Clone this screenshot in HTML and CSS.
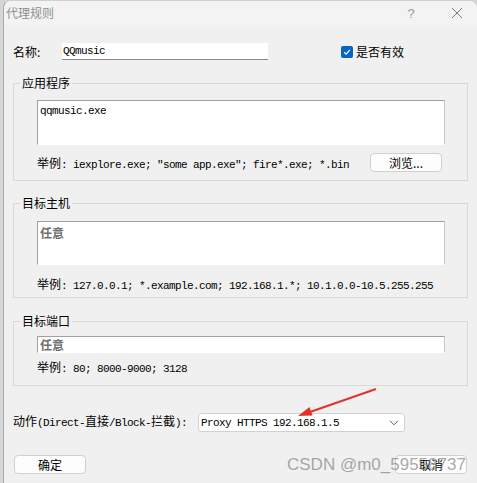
FILE: index.html
```html
<!DOCTYPE html>
<html lang="zh-CN">
<head>
    <meta charset="UTF-8">
    <title>代理规则</title>
    <link rel="stylesheet" href="styles.css">
</head>
<body>
    <div class="dialog">
        <div class="titlebar">
            <span class="title">代理规则</span>
            <span class="help">?</span>
            <span class="close">
                <svg width="12" height="12" viewBox="0 0 12 12"><path d="M1 1L11 11M11 1L1 11" stroke="#7a7a7a" stroke-width="1"/></svg>
            </span>
        </div>
        <div class="content">
            <div class="name-row">
                <label class="name-label">名称:</label>
                <input class="name-input mono" type="text" value="QQmusic">
                <label class="enabled">
                    <span class="checkbox">
                        <svg width="8" height="8" viewBox="0 0 8 8"><path d="M1.2 4.2L3.2 6.1L6.8 1.9" fill="none" stroke="#fff" stroke-width="1.2"/></svg>
                    </span>是否有效
                </label>
            </div>

            <fieldset class="group group-app">
                <legend>应用程序</legend>
                <div class="group-body">
                    <textarea class="field area mono">qqmusic.exe</textarea>
                    <div class="hint-row">
                        <span class="hint mono"><span class="cjk">举例</span>: iexplore.exe; "some app.exe"; fire*.exe; *.bin</span>
                        <button class="btn btn-browse">浏览...</button>
                    </div>
                </div>
            </fieldset>

            <fieldset class="group group-host">
                <legend>目标主机</legend>
                <div class="group-body">
                    <textarea class="field area any">任意</textarea>
                    <div class="hint mono"><span class="cjk">举例</span>: 127.0.0.1; *.example.com; 192.168.1.*; 10.1.0.0-10.5.255.255</div>
                </div>
            </fieldset>

            <fieldset class="group group-port">
                <legend>目标端口</legend>
                <div class="group-body">
                    <input class="field line any" type="text" value="任意">
                    <div class="hint mono"><span class="cjk">举例</span>: 80; 8000-9000; 3128</div>
                </div>
            </fieldset>

            <div class="action-row">
                <span class="action-label mono"><span class="cjk">动作</span>(Direct-<span class="cjk">直接</span>/Block-<span class="cjk">拦截</span>):</span>
                <div class="select-box">
                    <span class="mono">Proxy HTTPS 192.168.1.5</span>
                    <svg width="10" height="6" viewBox="0 0 10 6"><path d="M1 0.8L5 4.8L9 0.8" fill="none" stroke="#606060" stroke-width="1"/></svg>
                </div>
            </div>

            <div class="button-row">
                <button class="btn btn-main">确定</button>
                <button class="btn btn-main">取消</button>
            </div>
        </div>
    </div>

    <!-- annotation drawn on top of the screenshot -->
    <svg class="arrow" width="477" height="483" viewBox="0 0 477 483">
        <line x1="376" y1="389" x2="310" y2="412" stroke="#e2332b" stroke-width="2"/>
        <polygon points="298,416 312.5,415.5 309.5,407" fill="#e2332b"/>
    </svg>
    <div class="watermark">CSDN @m0_59558737</div>
</body>
</html>
```

FILE: styles.css
```css
body {
    margin: 0;
    width: 477px;
    height: 483px;
    overflow: hidden;
    background-color: #d6d6d6;
    font-family: "Noto Sans CJK SC", "Liberation Sans", sans-serif;
    font-size: 12px;
    color: #000;
    position: relative;
}
.mono {
    font-family: "Liberation Mono", "Noto Sans CJK SC", monospace;
    font-size: 11px;
    letter-spacing: -0.6px;
}
.cjk {
    font-family: "Noto Sans CJK SC", sans-serif;
    font-size: 12px;
    letter-spacing: 0;
    line-height: 1;
}
.dialog {
    margin-left: 3px;
    height: 483px;
    background-color: #f0f0f0;
    border-left: 1px solid #a9a9a9;
    border-top: 1px solid #d0d0d0;
    border-radius: 8px 8px 0 0;
    box-sizing: border-box;
}
.titlebar {
    display: flex;
    align-items: center;
    height: 24px;
    background-color: #f3f3f3;
    border-radius: 8px 8px 0 0;
    color: #8f8f8f;
}
.title {
    flex: 1;
    padding-left: 2px;
    line-height: 24px;
}
.help {
    width: 20px;
    margin-right: 16px;
    text-align: center;
    font-family: "Liberation Sans", sans-serif;
    font-size: 13px;
    color: #9a9a9a;
}
.close {
    width: 40px;
    display: flex;
    justify-content: center;
}
.content {
    padding: 18px 9px 0 9px;
}
.name-row {
    display: flex;
    align-items: center;
    height: 17px;
}
.name-label {
    width: 49px;
}
.name-input {
    width: 206px;
    height: 17px;
    box-sizing: border-box;
    border: none;
    border-bottom: 1px solid #8a8a8a;
    background: #fff;
    padding: 0 1px;
    margin: 0;
    outline: none;
}
.enabled {
    display: flex;
    align-items: center;
    margin-left: 73px;
}
.checkbox {
    width: 12px;
    height: 12px;
    margin-right: 3px;
    background-color: #0a64c2;
    border-radius: 2px;
    display: flex;
    align-items: center;
    justify-content: center;
}
.group {
    margin: 15px 0 0 0;
    padding: 0;
    border: 1px solid #d9d9d9;
    min-width: 0;
}
.group legend {
    margin-left: 6px;
    padding: 0 2px;
    line-height: 16px;
    height: 16px;
}
.group-body {
    padding: 9px 22px 8px 23px;
}
.group-host {
    margin-top: 14px;
}
.group-host .group-body {
    padding: 10px 22px 3px 23px;
}
.group-port .group-body {
    padding: 7px 22px 8px 23px;
}
.field {
    display: block;
    width: 100%;
    box-sizing: border-box;
    margin: 0;
    background: #fff;
    border: 1px solid #fff;
    border-top-color: #a0a0a0;
    border-left-color: #a0a0a0;
    border-right-color: #c9c9c9;
    outline: none;
    resize: none;
    overflow: hidden;
}
.area {
    height: 45px;
    padding: 3px 2px;
    line-height: 14px;
}
.group-host .area {
    height: 44px;
}
.line {
    height: 17px;
    padding: 0 2px;
}
.any {
    font-family: "Noto Sans CJK SC", sans-serif;
    font-size: 12px;
    font-weight: bold;
    color: #707070;
    line-height: 15px;
}
.hint-row {
    display: flex;
    align-items: center;
    justify-content: space-between;
    margin-top: 8px;
    height: 19px;
}
.hint-row .hint {
    padding-top: 4px;
}
.hint {
    height: 16px;
    line-height: 16px;
    white-space: nowrap;
}
.group-host .hint {
    margin-top: 13px;
}
.group-port .hint {
    margin-top: 8px;
}
.btn {
    background-color: #fdfdfd;
    border: 1px solid #d0d0d0;
    border-radius: 4px;
    font-family: "Noto Sans CJK SC", sans-serif;
    font-size: 12px;
    color: #000;
    padding: 0;
    margin: 0;
}
.btn-browse {
    width: 72px;
    height: 19px;
    margin-right: 3px;
    line-height: 17px;
}
.action-row {
    display: flex;
    align-items: center;
    margin-top: 27px;
    height: 19px;
}
.action-label {
    width: 185px;
    height: 16px;
    line-height: 16px;
}
.select-box {
    width: 207px;
    height: 19px;
    box-sizing: border-box;
    background: #fff;
    border: 1px solid #d2d2d2;
    border-radius: 3px;
    display: flex;
    align-items: center;
    justify-content: space-between;
    padding: 0 5px 0 2px;
}
.button-row {
    display: flex;
    justify-content: space-between;
    margin-top: 23px;
    padding: 0 1px;
}
.btn-main {
    width: 72px;
    height: 19px;
    line-height: 17px;
}
.arrow {
    position: absolute;
    left: 0;
    top: 0;
    pointer-events: none;
}
.watermark {
    position: absolute;
    left: 287px;
    top: 455px;
    font-family: "Liberation Sans", sans-serif;
    font-size: 17px;
    color: rgba(130, 130, 130, 0.7);
    white-space: nowrap;
    pointer-events: none;
}
```
